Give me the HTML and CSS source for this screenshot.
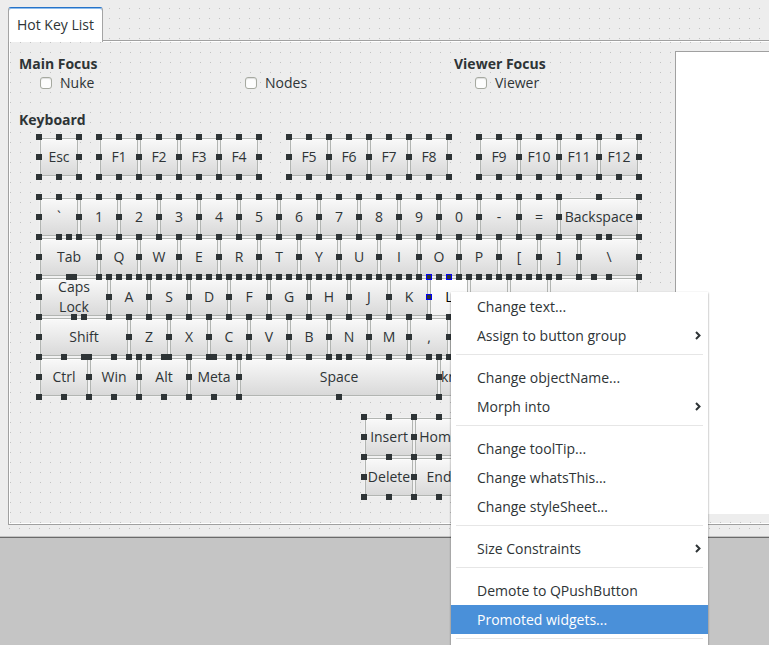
FILE: index.html
```html
<!DOCTYPE html>
<html lang="en">
<head>
<meta charset="utf-8">
<title>Hot Key List</title>
<link rel="stylesheet" href="styles.css">
</head>
<body>
<main class="workspace">
  <section class="form">
    <div class="tabs" role="tablist"><button class="tab" role="tab" aria-selected="true">Hot Key List</button></div>
    <div class="panel">
      <div class="editor">
        <div class="focus">
          <section class="group main-group">
            <h2>Main Focus</h2>
            <div class="checks">
              <label class="check"><input type="checkbox">Nuke</label>
              <label class="check"><input type="checkbox">Nodes</label>
            </div>
          </section>
          <section class="group">
            <h2>Viewer Focus</h2>
            <div class="checks">
              <label class="check"><input type="checkbox">Viewer</label>
            </div>
          </section>
        </div>
        <h2 class="keyboard-title">Keyboard</h2>
        <div class="keyboard">
          <div class="row function-row">
            <div class="cluster escape"><div class="key"><button>Esc</button></div></div>
            <div class="cluster"><div class="key"><button>F1</button></div><div class="key"><button>F2</button></div><div class="key"><button>F3</button></div><div class="key"><button>F4</button></div></div>
            <div class="cluster"><div class="key"><button>F5</button></div><div class="key"><button>F6</button></div><div class="key"><button>F7</button></div><div class="key"><button>F8</button></div></div>
            <div class="cluster"><div class="key"><button>F9</button></div><div class="key"><button>F10</button></div><div class="key"><button>F11</button></div><div class="key"><button>F12</button></div></div>
          </div>
          <div class="row">
            <div class="key"><button>`</button></div><div class="key"><button>1</button></div><div class="key"><button>2</button></div><div class="key"><button>3</button></div><div class="key"><button>4</button></div><div class="key"><button>5</button></div><div class="key"><button>6</button></div><div class="key"><button>7</button></div><div class="key"><button>8</button></div><div class="key"><button>9</button></div><div class="key"><button>0</button></div><div class="key"><button>-</button></div><div class="key"><button>=</button></div><div class="key w80"><button>Backspace</button></div>
          </div>
          <div class="row">
            <div class="key w60"><button>Tab</button></div><div class="key"><button>Q</button></div><div class="key"><button>W</button></div><div class="key"><button>E</button></div><div class="key"><button>R</button></div><div class="key"><button>T</button></div><div class="key"><button>Y</button></div><div class="key"><button>U</button></div><div class="key"><button>I</button></div><div class="key"><button>O</button></div><div class="key"><button>P</button></div><div class="key"><button>[</button></div><div class="key"><button>]</button></div><div class="key w60"><button>\</button></div>
          </div>
          <div class="row">
            <div class="key w70"><button>Caps<br>Lock</button></div><div class="key"><button>A</button></div><div class="key"><button>S</button></div><div class="key"><button>D</button></div><div class="key"><button>F</button></div><div class="key"><button>G</button></div><div class="key"><button>H</button></div><div class="key"><button>J</button></div><div class="key"><button>K</button></div><div class="key current"><button>L</button></div><div class="key"><button></button></div><div class="key"><button>'</button></div><div class="key w90"><button></button></div>
          </div>
          <div class="row">
            <div class="key w90"><button>Shift</button></div><div class="key"><button>Z</button></div><div class="key"><button>X</button></div><div class="key"><button>C</button></div><div class="key"><button>V</button></div><div class="key"><button>B</button></div><div class="key"><button>N</button></div><div class="key"><button>M</button></div><div class="key"><button>,</button></div><div class="key"><button></button></div>
          </div>
          <div class="row">
            <div class="key w50"><button>Ctrl</button></div><div class="key w50"><button>Win</button></div><div class="key w50"><button>Alt</button></div><div class="key w50"><button>Meta</button></div><div class="key w200"><button>Space</button></div><div class="key w50 cut"><button>kn</button></div>
          </div>
          <div class="navigation">
            <div class="row"><div class="key w50"><button>Insert</button></div><div class="key w50"><button>Home</button></div></div>
            <div class="row"><div class="key w50"><button>Delete</button></div><div class="key w50"><button>End</button></div></div>
          </div>
        </div>
      </div>
      <div class="list" role="listbox" aria-label="Hot keys"></div>
    </div>
  </section>
  <div class="menu" role="menu">
    <button role="menuitem">Change text...</button>
    <button role="menuitem">Assign to button group<svg viewBox="0 0 6 10"><path d="M1 1l3.5 3.5L1 8"/></svg></button>
    <hr>
    <button role="menuitem">Change objectName...</button>
    <button role="menuitem">Morph into<svg viewBox="0 0 6 10"><path d="M1 1l3.5 3.5L1 8"/></svg></button>
    <hr>
    <button role="menuitem">Change toolTip...</button>
    <button role="menuitem">Change whatsThis...</button>
    <button role="menuitem">Change styleSheet...</button>
    <hr>
    <button role="menuitem">Size Constraints<svg viewBox="0 0 6 10"><path d="M1 1l3.5 3.5L1 8"/></svg></button>
    <hr>
    <button role="menuitem">Demote to QPushButton</button>
    <button role="menuitem" class="active">Promoted widgets...</button>
    <hr>
  </div>
</main>
</body>
</html>
```
FILE: styles.css
```css
* { box-sizing: border-box; }

body {
  margin: 0;
  background: #c5c5c5;
  color: #2e3436;
  font: 14px/20px "Open Sans", "Noto Sans", sans-serif;
}

button { font: inherit; color: inherit; }

.workspace {
  position: relative;
  height: 100vh;
  overflow: hidden;
}

.form {
  padding: 7px 0 12px 8px;
  border-bottom: 1px solid #6b6b6b;
  box-shadow: inset 0 -1px #c4c4c4;
  background: conic-gradient(from 0deg at 1px 1px, transparent 75%, #c2c2c2 0) 9px 8px / 10px 10px, #ededed;
}

.tabs { display: flex; }

.tab {
  position: relative;
  z-index: 1;
  height: 35px;
  margin-bottom: -2px;
  padding: 0 8px 1px;
  border: 1px solid #a4a4a4;
  border-top: 1px solid #2573c9;
  border-bottom: 0;
  border-radius: 3px 3px 0 0;
  box-shadow: inset 0 1px #8fbdec;
  background: #fff;
}

.panel {
  display: flex;
  padding: 13px 0 0 10px;
  border: 1px solid #a0a0a0;
  border-right: 0;
  box-shadow: inset 1px 1px #fff, inset 0 -1px #fff;
  background: conic-gradient(from 0deg at 1px 1px, transparent 75%, #c2c2c2 0) 1px 1px / 10px 10px, #ededed;
}

.editor {
  flex: none;
  padding-right: 36px;
  padding-bottom: 27px;
}

.list {
  flex: 1;
  margin: -3px 0 10px;
  border: solid #a0a0a0;
  border-width: 1px 0 0 1px;
  background: #fff;
}

h2 {
  margin: 0;
  font-size: 14px;
  line-height: 20px;
}

.focus { display: flex; }
.main-group { width: 435px; }

.checks { padding-left: 21px; }

.main-group .checks {
  display: grid;
  grid-template-columns: 205px 1fr;
}

.check {
  display: flex;
  align-items: center;
  gap: 8px;
  height: 18px;
}

.check input {
  appearance: none;
  width: 12px;
  height: 12px;
  margin: 0;
  border: 1px solid #a6a9a0;
  border-radius: 3px;
  box-shadow: inset 0 1px 1px #ddd;
  background: #fdfdfd;
}

.keyboard-title { margin-top: 18px; }

.keyboard {
  width: 600px;
  margin: 7px 0 0 20px;
}

.row { display: flex; }

.function-row {
  gap: 30px;
  margin-bottom: 20px;
}

.cluster { display: flex; }
.escape { margin-right: -10px; }

.key {
  --handle: linear-gradient(#2e3436, #2e3436);
  position: relative;
  flex: none;
  width: 40px;
  height: 40px;
  padding: 1px;
}

.key button {
  display: flex;
  align-items: center;
  justify-content: center;
  width: 100%;
  height: 100%;
  padding: 0;
  border: 1px solid #b2b5b2;
  box-shadow: 0 0 0 1px #f2f2f2, inset 0 1px #fdfdfd;
  background: linear-gradient(#f9f9f9, #d9d9d9);
  white-space: nowrap;
}

.key::after {
  content: "";
  position: absolute;
  z-index: 1;
  inset: -3px;
  pointer-events: none;
  background:
    var(--handle) 0 0 / 6px 6px,
    var(--handle) 50% 0 / 6px 6px,
    var(--handle) 100% 0 / 6px 6px,
    var(--handle) 0 50% / 6px 6px,
    var(--handle) 100% 50% / 6px 6px,
    var(--handle) 0 100% / 6px 6px,
    var(--handle) 50% 100% / 6px 6px,
    var(--handle) 100% 100% / 6px 6px;
  background-repeat: no-repeat;
}

.key.current button {
  color: #000;
  background: linear-gradient(#fff, #f2f2f2);
}

.key.current::after {
  --ring: linear-gradient(#0000f0, #0000f0);
  background:
    var(--handle) 1px 1px / 4px 4px,
    var(--handle) 50% 1px / 4px 4px,
    var(--handle) 1px 50% / 4px 4px,
    var(--ring) 0 0 / 6px 6px,
    var(--ring) 50% 0 / 6px 6px,
    var(--ring) 0 50% / 6px 6px;
  background-repeat: no-repeat;
}

.w50 { width: 50px; }
.w60 { width: 60px; }
.w70 { width: 70px; }
.w80 { width: 80px; }
.w90 { width: 90px; }
.w200 { width: 200px; }
.cut button { justify-content: flex-start; }

.navigation { margin: 20px 0 0 325px; }

.menu {
  position: absolute;
  top: 292px;
  left: 451px;
  z-index: 2;
  width: 257px;
  background: #fff;
  box-shadow: 0 1px 2px rgba(0, 0, 0, .45);
}

.menu button {
  display: flex;
  align-items: center;
  justify-content: space-between;
  width: 100%;
  height: 29px;
  padding: 0 7px 0 26px;
  border: 0;
  background: none;
  text-align: left;
}

.menu button.active {
  color: #fff;
  background: #4a90d9;
}

.menu svg {
  width: 6px;
  height: 10px;
  fill: none;
  stroke: #2e3436;
  stroke-width: 2;
}

.menu hr {
  height: 1px;
  margin: 4px 5px 8px;
  border: 0;
  background: #e6e6e6;
}
```
